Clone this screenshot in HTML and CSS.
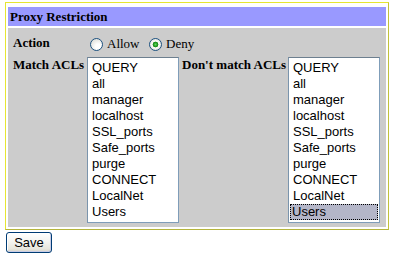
FILE: index.html
```html
<!DOCTYPE html>
<html>
<head>
<meta charset="utf-8">
<link rel="stylesheet" href="styles.css">
</head>
<body>
<form class="page">
  <div class="panel">
    <div class="panel-head">Proxy Restriction</div>
    <div class="panel-body">
      <div class="row-action">
        <div class="label">Action</div>
        <div class="radios">
          <label class="opt"><input type="radio" name="action" class="radio"><span>Allow</span></label>
          <label class="opt"><input type="radio" name="action" class="radio" checked><span>Deny</span></label>
        </div>
      </div>
      <div class="row-acls">
        <div class="label col1">Match ACLs</div>
        <div class="listbox col2" role="listbox">
          <div class="item">QUERY</div>
          <div class="item">all</div>
          <div class="item">manager</div>
          <div class="item">localhost</div>
          <div class="item">SSL_ports</div>
          <div class="item">Safe_ports</div>
          <div class="item">purge</div>
          <div class="item">CONNECT</div>
          <div class="item">LocalNet</div>
          <div class="item">Users</div>
        </div>
        <div class="label col3">Don't match ACLs</div>
        <div class="listbox" role="listbox">
          <div class="item">QUERY</div>
          <div class="item">all</div>
          <div class="item">manager</div>
          <div class="item">localhost</div>
          <div class="item">SSL_ports</div>
          <div class="item">Safe_ports</div>
          <div class="item">purge</div>
          <div class="item">CONNECT</div>
          <div class="item">LocalNet</div>
          <div class="item selected">Users</div>
        </div>
      </div>
    </div>
  </div>
  <button type="button" class="save">Save</button>
</form>
</body>
</html>
```
FILE: styles.css
```css
html, body {
  margin: 0;
  padding: 0;
  background: #ffffff;
}
body {
  font-family: "Liberation Serif", "Times New Roman", serif;
  font-size: 13px;
  color: #000;
}
.page {
  margin: 0;
  padding: 2px 0 0 5px;
}
.panel {
  width: 378px;
  border: 1px solid;
  border-color: #e6e632 #c2c23c #b4b43c #e6e632;
  padding: 4px 2px 2px 2px;
  display: flex;
  flex-direction: column;
  gap: 2px;
}
.panel-head {
  background: #9999ff;
  height: 19px;
  line-height: 19px;
  padding-left: 2px;
  font-weight: bold;
}
.panel-body {
  background: #cccccc;
  height: 199px;
  box-sizing: border-box;
  padding: 6px 0 4px 5px;
  display: flex;
  flex-direction: column;
  gap: 5px;
}
.label {
  font-weight: bold;
  line-height: 18px;
}
.row-action {
  display: flex;
  height: 18px;
}
.row-action .label {
  width: 74px;
}
.radios {
  display: flex;
  align-items: center;
  height: 18px;
  margin-top: 1px;
}
.opt {
  display: flex;
  align-items: center;
  line-height: 18px;
}
.opt + .opt {
  margin-left: 6.5px;
}
.radio {
  appearance: none;
  -webkit-appearance: none;
  width: 13px;
  height: 13px;
  margin: 0 4px 0 3px;
  box-sizing: border-box;
  border: 1px solid #1c5180;
  border-radius: 50%;
  background: radial-gradient(circle at 65% 70%, #ffffff 0%, #ffffff 25%, #dcdcd6 85%);
}
.radio:checked {
  background: radial-gradient(circle at 50% 50%, #5fd55f 0%, #21a121 1.8px, #178017 2.6px, #ffffff 3.2px, #f2f2ee 55%, #d8d8d2 90%);
}
.row-acls {
  display: flex;
  align-items: flex-start;
  height: 166px;
}
.row-acls .label {
  line-height: 15px;
}
.col1 {
  width: 74px;
}
.col2 {
  margin-right: 3px;
}
.col3 {
  width: 106px;
}
.listbox {
  width: 92px;
  height: 166px;
  box-sizing: border-box;
  border: 1px solid #7f9db9;
  border-top-color: #6d7f8f;
  border-left-color: #7a94ac;
  background: #ffffff;
  padding: 2px 1px;
  font-family: "Liberation Sans", Arial, sans-serif;
  font-size: 13px;
  overflow: hidden;
}
.item {
  height: 16px;
  line-height: 16px;
  padding-left: 3px;
  white-space: nowrap;
  box-sizing: border-box;
}
.item.selected {
  background: #b4b6c8;
  outline: 1px dotted #000;
  outline-offset: -1px;
  padding-left: 2px;
}
.save {
  display: block;
  margin: 2px 0 0 1px;
  width: 46px;
  height: 21px;
  padding: 0;
  box-sizing: border-box;
  border: 1px solid #003c74;
  border-radius: 3px;
  background: linear-gradient(to bottom, #ffffff 0%, #f4f4f0 45%, #e6e5dc 85%, #d6d0c5 100%);
  box-shadow: inset -1px -1px 0 #c8cde6, inset 1px 1px 0 #ffffff;
  font-family: "Liberation Sans", Arial, sans-serif;
  font-size: 13px;
  color: #000;
  line-height: 19px;
}
```
